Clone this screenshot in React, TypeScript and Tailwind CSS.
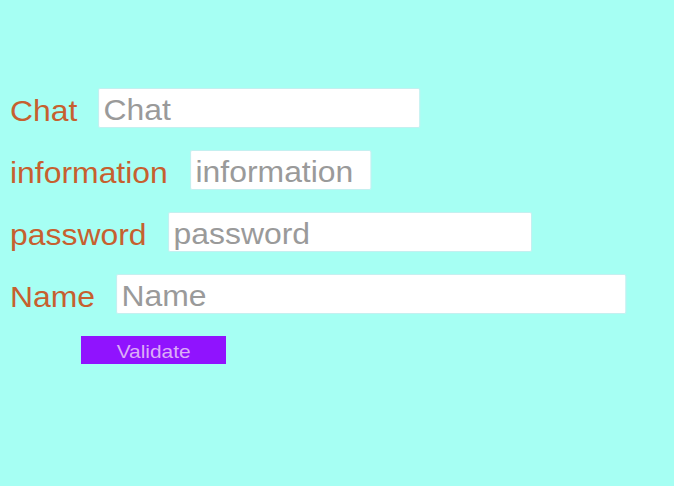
import React from "react";

const rows = [
  { label: "Chat", left: 88, width: 322 },
  { label: "information", left: 180, width: 181 },
  { label: "password", left: 158, width: 364 },
  { label: "Name", left: 106, width: 510 },
];

export default function App() {
  return (
    <div
      className="w-[674px] h-[486px] bg-[#a6fff3] flex flex-col gap-[22px] pt-[88px] overflow-hidden"
      style={{ fontFamily: '"Liberation Sans", Arial, sans-serif' }}
    >
      {rows.map((r) => (
        <div key={r.label} className="flex items-start pl-[10px] h-[40px]">
          <span style={{ width: r.left }} className="shrink-0 h-[40px] leading-[40px]">
            <span className="inline-block text-[29px] leading-[40px] text-[#c6602f] origin-left scale-x-[1.1] translate-y-[3px] whitespace-nowrap">
              {r.label}
            </span>
          </span>
          <input
            type="text"
            placeholder={r.label}
            style={{ width: r.width / 1.1 }}
            className="shrink-0 h-[40px] bg-white border border-[#c4f0f0] rounded-[2px] pl-[4px] pt-[6px] text-[29px] leading-normal text-[#555] placeholder:text-[#9a9a9a] outline-none origin-left scale-x-[1.1]"
          />
        </div>
      ))}
      <div className="pl-[81px]">
        <button className="w-[145px] h-[28px] bg-[#9013fe] flex items-center justify-center">
          <span className="inline-block text-[19px] leading-none text-[#dcadf7] scale-x-[1.1] translate-y-[1px]">
            Validate
          </span>
        </button>
      </div>
    </div>
  );
}
